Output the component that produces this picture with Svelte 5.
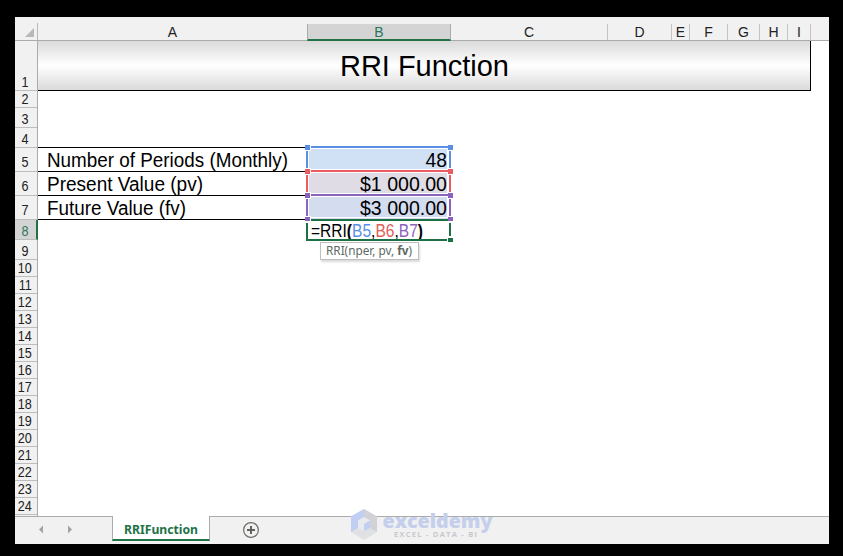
<script>
  const columns = [
    { name: 'A', width: 270 },
    { name: 'B', width: 143, active: true },
    { name: 'C', width: 157 },
    { name: 'D', width: 64 },
    { name: 'E', width: 18 },
    { name: 'F', width: 38 },
    { name: 'G', width: 32 },
    { name: 'H', width: 28 },
    { name: 'I', width: 23 }
  ];
  const heights = [50, 17, 20, 20, 24, 24, 24, 20, 20];
  const rows = Array.from({ length: 24 }, (_, i) => ({ n: i + 1, h: heights[i] ?? 17 }));
  const inputs = [
    { label: 'Number of Periods (Monthly)', value: '48', fill: '#d0e1f5', w: 241, vw: 21.5 },
    { label: 'Present Value (pv)', value: '$1 000.00', fill: '#dfdce6', w: 156, vw: 87 },
    { label: 'Future Value (fv)', value: '$3 000.00', fill: '#d4dcf0', w: 139, vw: 87 }
  ];
  const ranges = [
    { y: 5, color: '#5b8fe6' },
    { y: 29, color: '#ea5b62' },
    { y: 53, color: '#8c62bf' }
  ];
</script>

<div class="screen">
  <div class="window">
    <div class="col-heads">
      <div class="corner"><svg width="9" height="9"><path d="M9 0V9H0Z" fill="#b8b8b8" /></svg></div>
      {#each columns as c}
        <div class="col" class:active={c.active} style:width="{c.width}px"><span>{c.name}</span></div>
      {/each}
    </div>
    <div class="body">
      <div class="row-heads">
        {#each rows as r}
          <div class="row-head" class:raised={r.n >= 5 && r.n <= 7} class:active={r.n === 8} style:height="{r.h}px"><span>{r.n}</span></div>
        {/each}
      </div>
      <div class="sheet">
        <div class="title">
          <svg width="169" height="40"><text x="0" y="30" textLength="169">RRI Function</text></svg>
        </div>
        <div class="gap"></div>
        <div class="table">
          {#each inputs as r}
            <div class="line">
              <div class="label"><svg width="260" height="23"><text x="0" y="19" textLength={r.w} lengthAdjust="spacingAndGlyphs">{r.label}</text></svg></div>
              <div class="value" style:background={r.fill}>
                <svg width="100" height="23"><text x={100 - r.vw} y="19" textLength={r.vw} lengthAdjust="spacingAndGlyphs">{r.value}</text></svg>
              </div>
            </div>
          {/each}
          <div class="formula">
            <svg width="140" height="20">
              <text x="0" y="16.5" textLength="112" lengthAdjust="spacingAndGlyphs">=RRI<tspan font-weight="bold">(</tspan><tspan fill="#5b8fe6">B5</tspan>,<tspan fill="#e2605a">B6</tspan>,<tspan fill="#8c62bf">B7</tspan><tspan font-weight="bold">)</tspan></text>
            </svg>
          </div>
          <svg class="marks" width="151" height="100" shape-rendering="crispEdges">
            <g fill="none" stroke="#1d7044" stroke-width="2">
              <path d="M5 78V99M4 78H149M4 98H145M148 78V94" />
            </g>
            <rect x="145" y="95" width="6" height="6" fill="#fff" />
            <rect x="146" y="96" width="5" height="4" fill="#1d7044" />
            {#each ranges as r}
              <rect x="6.5" y={r.y + 1.5} width="139" height="21" fill="none" stroke="#fff" />
              <path d="M5 {r.y}V{r.y + 24}M148 {r.y}V{r.y + 24}" stroke="#fff" stroke-width="4" />
              <path d="M5 {r.y}V{r.y + 24}M148 {r.y}V{r.y + 24}M5 {r.y}H148" stroke={r.color} stroke-width="2" />
            {/each}
            <path d="M4 78H149" stroke="#1d7044" stroke-width="2" />
            {#each [...ranges, { y: 77, color: '#8c62bf' }] as r}
              {#each [3, 146] as x}
                <rect {x} y={r.y - 3} width="6" height="7" fill="#fff" />
                <rect {x} y={r.y - 2} width="5" height={r.y === 77 ? 4 : 5} fill={r.color} />
              {/each}
            {/each}
          </svg>
          <div class="hint"><svg width="92" height="16"><text x="0" y="11.5" textLength="86" lengthAdjust="spacingAndGlyphs">RRI(nper, pv, <tspan font-weight="bold">fv</tspan>)</text></svg></div>
        </div>
      </div>
    </div>
    <div class="tabs">
      <svg class="arrows" width="97" height="27"><path d="M28 8.5V16.5L24 12.5ZM53 8.5V16.5L57 12.5Z" fill="#a3a3a3" /></svg>
      <div class="tab"><svg width="76" height="20"><text x="0" y="14" textLength="74" lengthAdjust="spacingAndGlyphs">RRIFunction</text></svg></div>
      <svg class="add" width="16" height="16" fill="none">
        <circle cx="8" cy="8" r="7.4" stroke="#6b6e66" stroke-width="1.2" />
        <path d="M8 4V12M4 8H12" stroke="#5f6259" stroke-width="2" />
      </svg>
    </div>
    <div class="brand">
      <svg width="144" height="34">
        <path d="M14 0L27 7.5V23L14 31L1 23V7.5Z" fill="#dfe1e5" />
        <path d="M14 0L1 7.5V23L8 19V11.5L14 8Z" fill="#c0cff1" />
        <path d="M14 0L27 7.5V23L20 19V11.5L14 8Z" fill="#d0d2d7" />
        <path d="M14 8L20 11.5L14 15V22L8 19V11.5Z" fill="#e8eaf0" />
        <path d="M14 15L20 11.5V19L14 22Z" fill="#c0cff1" />
        <text class="name" x="32.5" y="18.5" textLength="110" lengthAdjust="spacingAndGlyphs">exceldemy</text>
        <text class="sub" x="44" y="28" textLength="83">EXCEL - DATA - BI</text>
      </svg>
    </div>
  </div>
</div>

<style>
  :global(body) { margin: 0; background: #000; }
  .screen { width: 843px; height: 556px; box-sizing: border-box; padding: 17px 14px 12px 15px; background: #000; overflow: hidden; font-family: 'Liberation Sans', Arial, sans-serif; color: #000; }
  .window { position: relative; width: 814px; height: 527px; background: #fff; display: flex; flex-direction: column; overflow: hidden; }
  svg { display: block; overflow: visible; }
  .col-heads { height: 24px; box-sizing: border-box; flex: none; display: flex; align-items: flex-end; background: #f1f1f1; border-bottom: 1px solid #ababab; }
  .corner { width: 23px; height: 17px; box-sizing: border-box; border-right: 1px solid #b9b9b9; padding: 5px 0 0 10px; }
  .col { height: 16px; box-sizing: border-box; flex: none; border-right: 1px solid #c3c3c3; font-size: 14px; line-height: 17px; text-align: center; color: #222; }
  .col.active { margin: 0 0 -1px -1px; box-sizing: content-box; height: 15px; border-left: 1px solid #ababab; border-right-color: #ababab; border-bottom: 2px solid #217346; background: #d4d4d4; color: #2b7559; max-width: 142px; }
  .body { height: 475px; flex: none; display: flex; overflow: hidden; }
  .row-heads { width: 23px; height: 475px; flex: none; box-sizing: border-box; border-right: 1px solid #ababab; background: #f1f1f1; }
  .row-head { box-sizing: border-box; border-bottom: 1px solid #bdbdbd; display: flex; align-items: flex-end; justify-content: center; padding-right: 2px; font-size: 14px; line-height: 15px; color: #222; }
  .row-head.raised { padding-bottom: 1px; }
  .row-head span { transform: scaleX(0.9); }
  .row-head.active { background: #d4d4d4; color: #2b7559; border-right: 2px solid #217346; margin-right: -1px; padding-right: 1px; }
  .sheet { flex: 1; }
  .title { width: 773px; height: 50px; box-sizing: border-box; border-right: 1px solid #000; border-bottom: 1px solid #000; background: linear-gradient(#dadada, #fff 50%, #dadada); display: flex; justify-content: center; padding-top: 5px; font-size: 29px; }
  .gap { height: 56px; }
  .table { position: relative; width: 413px; border-top: 1px solid #000; }
  .line { display: flex; height: 24px; }
  .label { width: 269px; height: 24px; box-sizing: border-box; border-bottom: 1px solid #000; padding-left: 9px; font-size: 19.5px; }
  .value { width: 144px; box-sizing: border-box; padding-right: 4px; display: flex; justify-content: flex-end; font-size: 19.5px; }
  .formula { margin-left: 273px; height: 20px; font-size: 18px; }
  .marks { position: absolute; left: 264px; top: -6px; }
  .hint { position: absolute; left: 282px; top: 94px; width: 99px; height: 18px; box-sizing: border-box; border: 1px solid #bfbfbf; background: #fff; box-shadow: 1px 2px 2px rgba(0, 0, 0, 0.15); padding-left: 5px; font: 12px 'Noto Sans', 'Open Sans', sans-serif; }
  .hint text { fill: #5d6962; }
  .tabs { height: 28px; flex: none; box-sizing: border-box; border-top: 1px solid #ababab; background: #f1f1f1; display: flex; }
  .tab { width: 98px; height: 25px; box-sizing: border-box; margin-top: -1px; border: solid #ababab; border-width: 0 1px; border-bottom: 2px solid #217346; background: #fff; padding: 4px 0 0 11px; font: bold 12.5px 'Noto Sans', 'Open Sans', sans-serif; }
  .tab text { fill: #217346; }
  .add { margin: 5px 0 0 33px; }
  .brand { position: absolute; left: 335px; top: 492px; }
  .name { font: 800 20px 'Open Sans', 'Noto Sans', sans-serif; fill: #c4cfec; }
  .sub { font: bold 7.5px 'Open Sans', 'Noto Sans', sans-serif; fill: #c7c9cd; }
</style>
